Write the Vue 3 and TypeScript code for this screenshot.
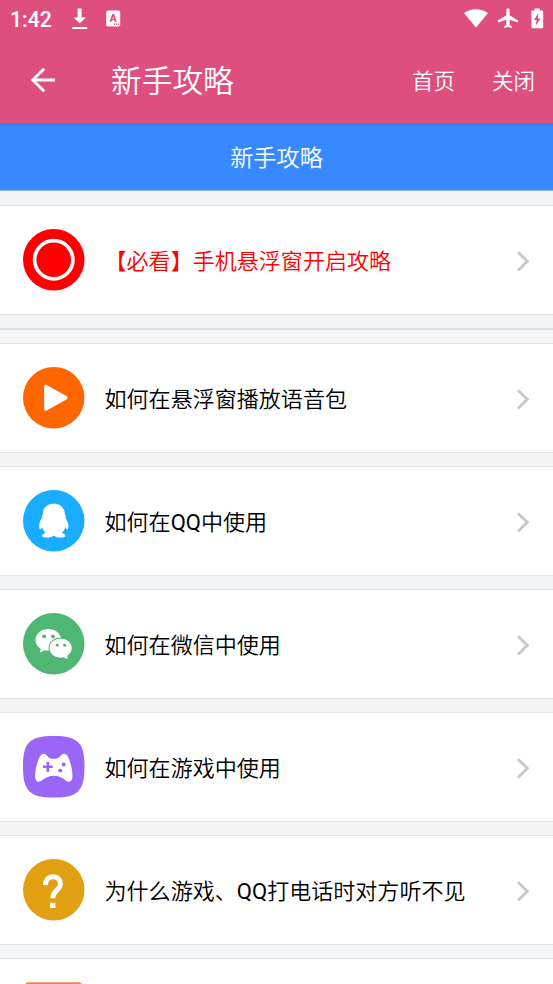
<script setup lang="ts">
type IconName = 'record' | 'play' | 'qq' | 'wechat' | 'game' | 'question' | 'more'

interface GuideItem {
  icon: IconName
  title: string
  highlight?: boolean
}

const pinned: GuideItem[] = [{ icon: 'record', title: '【必看】手机悬浮窗开启攻略', highlight: true }]

const guides: GuideItem[] = [
  { icon: 'play', title: '如何在悬浮窗播放语音包' },
  { icon: 'qq', title: '如何在QQ中使用' },
  { icon: 'wechat', title: '如何在微信中使用' },
  { icon: 'game', title: '如何在游戏中使用' },
  { icon: 'question', title: '为什么游戏、QQ打电话时对方听不见' },
  { icon: 'more', title: '' },
]

const groups: GuideItem[][] = [pinned, guides]

// Latin runs carry a heavier weight than the Chinese text around them.
const runs = (title: string): string[] => title.split(/([A-Za-z]+)/).filter(Boolean)
const isLatin = (run: string): boolean => /^[A-Za-z]/.test(run)
</script>

<template>
  <div class="screen">
    <header class="top">
      <div class="status">
        <span class="clock">1:42</span>
        <svg class="s-download" width="16" height="22" viewBox="0 0 16 22">
          <path d="M5.6 0.6h4v9h4.2L7.7 15.4 1.7 9.6h3.9zM0.2 19h15v2.1h-15z" fill="#fff" />
        </svg>
        <svg class="s-app" width="15" height="17" viewBox="0 0 15 17">
          <rect x="0.2" y="0.4" width="14" height="16" rx="1.6" fill="#fff" />
          <path
            d="M6.300 3.900h1.900l2.700 7.800H8.900l-.5-1.500H6l-.5 1.500H3.600zM6.500 8.700h1.400l-.7-2.300z"
            fill="#de4f7f"
            fill-rule="evenodd"
          />
          <path d="M7.8 14.2h1.3m.8 0h1.3m.8 0h1.3" stroke="#de4f7f" stroke-width="1.2" />
        </svg>
        <span class="spacer"></span>
        <svg class="s-wifi" width="24" height="19" viewBox="0 0 24 19">
          <path d="M12 18.4 0 4.1C3.4 1.500 7.300 0.200 12 0.200S20.600 1.500 24 4.100z" fill="#fff" />
        </svg>
        <svg class="s-plane" width="20" height="21" viewBox="0 0 20 21">
          <path
            d="M20 14.400v-2L11.600 7.200V1.800a1.600 1.600 0 0 0-3.200 0v5.400L0 12.400v2l8.400-2.600v5.100l-2.300 1.600v1.600l3.900-1.100 3.900 1.100v-1.600l-2.300-1.600v-5.100z"
            fill="#fff"
          />
        </svg>
        <svg class="s-battery" width="13" height="21" viewBox="0 0 13 21">
          <path
            d="M1.300 2.400h2.400V.5h5v1.900h2.300q1.200 0 1.200 1.200v15.300q0 1.300-1.200 1.300H1.500Q.4 20.200.4 18.900V3.600q0-1.200 1.100-1.200z"
            fill="#fff"
          />
          <path d="M7.300 5.200 2.900 12h2.600l-.7 5.800 4.800-7.400H7z" fill="#de4f7f" />
        </svg>
      </div>
      <nav class="bar">
        <svg class="back" width="25" height="26" viewBox="0 0 25 26">
          <path d="M24 13H2M13.200 1.700 1.800 13l11.400 11.300" fill="none" stroke="#fff" stroke-width="2.900" />
        </svg>
        <h1 class="title">新手攻略</h1>
        <a class="action">首页</a>
        <a class="action">关闭</a>
      </nav>
    </header>

    <h2 class="banner">新手攻略</h2>

    <section v-for="(group, g) in groups" :key="g" class="group">
      <div v-for="item in group" :key="item.icon" class="row">
        <svg class="icon" viewBox="0 0 62 62">
          <template v-if="item.icon === 'record'">
            <circle cx="31" cy="31" r="31" fill="#ff0000" />
            <circle cx="31" cy="31" r="19.300" fill="none" stroke="#fff" stroke-width="3.700" />
          </template>
          <template v-else-if="item.icon === 'play'">
            <circle cx="31" cy="31" r="31" fill="#ff6600" />
            <path d="M23 19.700v22.600L43.300 31z" fill="#fff" stroke="#fff" stroke-width="3.400" stroke-linejoin="round" />
          </template>
          <template v-else-if="item.icon === 'qq'">
            <circle cx="31" cy="31" r="31" fill="#1aadff" />
            <path
              d="M31 13.900C23.600 13.900 20 18.600 20 24.300c-.2 1-.8 1.600-.7 3.200C17.600 30.500 15.800 34 16.300 37.500c.2 2 1.100 3 2.200 1.500l1-1.500c.6 2.300 1.700 4.300 3.300 5.900-2.500.8-4 2-3.500 3.300 1 2 9.200 1.700 11.700-.9 2.500 2.600 10.700 2.900 11.700.9.500-1.300-1-2.500-3.500-3.300 1.600-1.600 2.700-3.600 3.300-5.900l1 1.500c1.100 1.500 2 .5 2.200-1.500.5-3.500-1-6-2.800-9.200.5-1.700.3-3-.7-4C42 18.600 38.400 13.900 31 13.900z"
              fill="#fff"
            />
          </template>
          <template v-else-if="item.icon === 'wechat'">
            <circle cx="31" cy="31" r="31" fill="#50b674" />
            <ellipse cx="25.500" cy="27" rx="13" ry="10.900" fill="#fff" />
            <path d="m18.500 34-1.600 6 6.500-3.500z" fill="#fff" />
            <ellipse cx="37.900" cy="35.400" rx="12.200" ry="10.700" fill="#50b674" />
            <ellipse cx="37.900" cy="35.400" rx="11.200" ry="9.700" fill="#fff" />
            <path d="m40 44.300 5.300 2-1-4z" fill="#fff" />
            <circle cx="21.300" cy="23.600" r="1.900" fill="#50b674" />
            <circle cx="30.200" cy="23.600" r="1.900" fill="#50b674" />
            <circle cx="34.500" cy="32.600" r="1.500" fill="#50b674" />
            <circle cx="42" cy="32.600" r="1.500" fill="#50b674" />
          </template>
          <template v-else-if="item.icon === 'game'">
            <path
              d="M31 0C44 0 51 1.800 55.600 6.400S62 18 62 31 60.200 51 55.600 55.600 44 62 31 62 11 60.200 6.400 55.600 0 44 0 31 1.800 11 6.400 6.400 18 0 31 0z"
              fill="#9966f6"
            />
            <path
              d="M21 18c2.900 0 4 4.700 7.500 4.900h5C37 22.700 38.500 18 41.500 18c3.200 0 5 4.300 6.800 11.200 1.800 6.600 2.700 16.200-1.200 17-3.800.8-6.700-6.200-16-6.200s-12.300 6.900-16.100 6.100c-3.900-.8-3-10.300-1.200-16.900C15.700 22.300 17.800 18 21 18z"
              fill="#fff"
            />
            <path d="M25 26v10M20 31h10" stroke="#9966f6" stroke-width="2.700" />
            <circle cx="41" cy="28.700" r="2" fill="#9966f6" />
            <circle cx="37.500" cy="34.900" r="2" fill="#9966f6" />
          </template>
          <template v-else-if="item.icon === 'question'">
            <circle cx="31" cy="31" r="31" fill="#e1a012" />
            <path
              d="M22.600 26.300c.2-5.400 3.100-8.400 7.700-8.400 4.800 0 7.400 2.800 7.400 7.300 0 6.400-7.700 6.300-7.700 14.300"
              fill="none"
              stroke="#fff"
              stroke-width="5"
            />
            <path d="M27.300 44.200h5.400v5.200h-5.400z" fill="#fff" />
          </template>
          <rect v-else x="0.800" y="0.200" width="60" height="61" rx="5" fill="#f3814f" />
        </svg>
        <span class="label" :class="{ highlight: item.highlight }"
          ><span v-for="(run, r) in runs(item.title)" :key="r" :class="{ latin: isLatin(run) }">{{ run }}</span></span
        >
        <svg class="chevron" width="14" height="22" viewBox="0 0 14 22">
          <path d="M2 2.200 11.300 11.300 2 20.400" fill="none" stroke="#c7c7cc" stroke-width="2.800" />
        </svg>
      </div>
    </section>
  </div>
</template>

<style>
body {
  margin: 0;
  overflow: hidden;
}
</style>

<style scoped>
.screen {
  width: 553px;
  height: 984px;
  overflow: hidden;
  background: #f4f5f7;
  font-family: Roboto, 'Noto Sans CJK SC', sans-serif;
  font-weight: 350;
  color: #000;
}
.top {
  height: 123px;
  background: #de4f7f;
  color: #fff;
}
.status {
  display: flex;
  align-items: flex-start;
  height: 37px;
  padding: 0 9px 0 10px;
}
.clock {
  width: 42px;
  margin-top: 7px;
  font-size: 21.200px;
  font-weight: 500;
  line-height: 25px;
}
.s-download {
  margin: 8px 0 0 20px;
}
.s-app {
  margin: 10px 0 0 18px;
}
.spacer {
  flex: 1;
}
.s-wifi {
  margin-top: 9px;
}
.s-plane {
  margin: 8px 0 0 10px;
}
.s-battery {
  margin: 8px 0 0 13px;
}
.bar {
  display: flex;
  align-items: center;
  height: 86px;
  padding: 0 18px 0 31px;
}
.title {
  flex: 1;
  margin: 4px 0 0 55px;
  font-size: 30.700px;
  font-weight: inherit;
  line-height: 44px;
}
.action {
  margin: 3px 0 0 37px;
  font-size: 21.500px;
  line-height: 32px;
}
.banner {
  height: 67px;
  margin: 0 0 14px;
  border-bottom: 1px solid #8ab8fb;
  background: linear-gradient(#367cec, #3888ff 5px);
  color: #fff;
  font-size: 23.200px;
  font-weight: inherit;
  line-height: 71px;
  text-align: center;
}
.group {
  display: flex;
  flex-direction: column;
  gap: 13px;
}
.group + .group {
  margin-top: 13px;
  padding-top: 13px;
  border-top: 2px solid #e0e1e3;
}
.row {
  display: flex;
  align-items: center;
  box-sizing: border-box;
  height: 110px;
  padding: 0 23px;
  border: solid #e2e3e5;
  border-width: 1px 0;
  background: #fff;
}
.icon {
  flex: none;
  width: 61.500px;
  height: 61.500px;
}
.label {
  flex: 1;
  margin: 4px 0 0 20px;
  font-size: 22.050px;
  line-height: 32px;
  white-space: nowrap;
}
.latin {
  font-weight: 400;
}
.highlight {
  color: #ff0000;
}
.chevron {
  margin-top: 2px;
}
</style>
